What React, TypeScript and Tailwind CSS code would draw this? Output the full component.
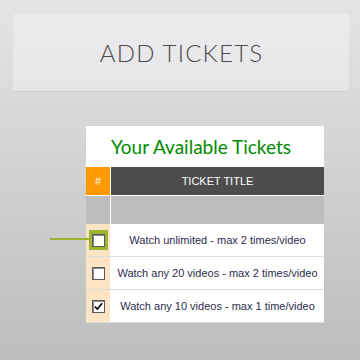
import React from "react";

const tickets = [
  { title: "Watch unlimited - max 2 times/video", checked: false, focus: true },
  { title: "Watch any 20 videos - max 2 times/video", checked: false, focus: false },
  { title: "Watch any 10 videos - max 1 time/video", checked: true, focus: false },
];

function Box({ checked }: { checked: boolean }) {
  return (
    <span className="flex h-[13px] w-[13px] items-center justify-center border border-[#5a5a5a] bg-white shadow-[inset_1px_1px_0_#8a8a8a]">
      {checked && (
        <svg viewBox="0 0 11 11" className="h-[9px] w-[9px]">
          <path d="M1 5.5l3 3 6-7" fill="none" stroke="#000" strokeWidth={2} />
        </svg>
      )}
    </span>
  );
}

export default function App() {
  return (
    <div className="relative h-[360px] w-[360px] overflow-hidden bg-gradient-to-b from-[#e5e4e7] to-[#bdbdbd] pt-[14px]">
      {/* big button */}
      <div className="mx-[13px] flex h-[77px] w-[336px] items-center justify-center rounded-[3px] bg-gradient-to-b from-[#ecebee] to-[#e6e5e8] shadow-[0_1px_1px_rgba(0,0,0,0.06)]">
        <span className="font-['Lato',sans-serif] text-[24px] font-light tracking-[1.2px] text-[#4a4a4a] pl-[1px]">
          ADD TICKETS
        </span>
      </div>

      {/* tickets table */}
      <div className="ml-[86px] mt-[35px] w-[238px] bg-white font-['Liberation_Sans',sans-serif]">
        <div className="flex h-[41px] items-center justify-center pt-[1px] pr-[8px] font-['Lato',sans-serif] text-[19px] text-[#008a00]">
          Your Available Tickets
        </div>
        <div className="flex h-[28px] text-[11px] text-white">
          <div className="flex w-[24px] items-center justify-center bg-[#ff9900]">#</div>
          <div className="ml-px flex flex-1 items-center justify-center bg-[#4d4d4d]">TICKET TITLE</div>
        </div>
        <div className="mt-px flex h-[28px]">
          <div className="w-[24px] bg-[#bdbdbd]"></div>
          <div className="ml-px flex-1 bg-[#bdbdbd]"></div>
        </div>
        {tickets.map((t) => (
          <div key={t.title} className="flex h-[33px] border-b border-[#dedede]">
            <div className="relative flex w-[24px] items-center justify-center bg-[#fde4c4]">
              {t.focus ? (
                <span className="flex h-[20px] w-[19px] items-center justify-center bg-[#9db433]">
                  <Box checked={t.checked} />
                </span>
              ) : (
                <Box checked={t.checked} />
              )}
              {t.focus && (
                <span className="absolute left-[-36px] top-[14px] h-[2px] w-[39px] bg-[#9db433]"></span>
              )}
            </div>
            <div className="ml-px flex flex-1 items-center justify-center text-[11px] text-[#2c2c4e]">
              {t.title}
            </div>
          </div>
        ))}
      </div>
    </div>
  );
}
